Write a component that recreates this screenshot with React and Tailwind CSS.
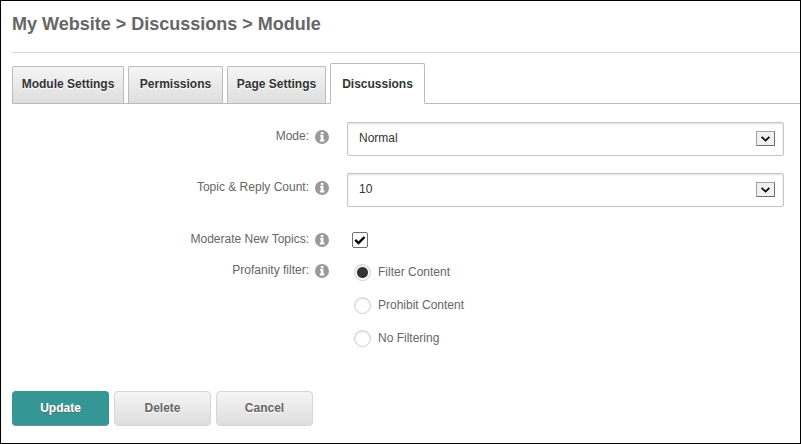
import { useState } from 'react';

function InfoIcon() {
  return (
    <svg viewBox="0 0 14 14" className="mt-0.5 h-[14px] w-[14px] shrink-0" aria-hidden="true">
      <circle cx="7" cy="7" r="7" fill="#999" />
      <path d="M5.8 2h2.6v2.2H5.8zM5 5h3.4v4.6h1V11.5H4.8V9.6h1V6.6H5z" fill="#fff" />
    </svg>
  );
}

function FieldLabel({ htmlFor, id, children }) {
  return (
    <div className="flex justify-end gap-1.5">
      {htmlFor ? <label htmlFor={htmlFor}>{children}</label> : <span id={id}>{children}</span>}
      <InfoIcon />
    </div>
  );
}

function SelectField({ id, options }) {
  return (
    <div className="relative">
      <select
        id={id}
        className="block h-[34px] w-full appearance-none rounded-xs border border-[#c6c6c6] bg-white pb-0.5 pl-[11px] text-xs text-[#333] shadow-[inset_0_1px_2px_#ddd]"
      >
        {options.map((option) => (
          <option key={option}>{option}</option>
        ))}
      </select>
      <span className="pointer-events-none absolute top-[9px] right-[9px] flex h-[15px] w-[19px] items-center justify-center border border-[#707070] border-t-[#a0a0a0] border-l-[#a0a0a0] bg-[#f0f0f0]">
        <svg viewBox="0 0 9 6" className="h-[6px] w-[9px]" aria-hidden="true">
          <path d="M0.6 0.8l3.9 3.7L8.4 0.8" fill="none" stroke="#000" strokeWidth="1.7" />
        </svg>
      </span>
    </div>
  );
}

const tabs = [
  { name: 'Module Settings', width: 'w-[112px]' },
  { name: 'Permissions', width: 'w-[95px]' },
  { name: 'Page Settings', width: 'w-[99px]' },
  { name: 'Discussions', width: 'w-[95px]' },
];

const filters = ['Filter Content', 'Prohibit Content', 'No Filtering'];

export default function App() {
  const [active, setActive] = useState('Discussions');
  const [filter, setFilter] = useState('Filter Content');

  return (
    <main className="min-h-screen border border-black bg-white pl-[11px] font-['Liberation_Sans',Arial,sans-serif] text-xs text-[#666]">
      <h1 className="border-b border-[#d9d9d9] pt-[11px] pb-4 text-lg leading-6 font-bold">
        My Website &gt; Discussions &gt; Module
      </h1>

      <div role="tablist" className="mt-2.5 flex h-[41px] items-end gap-1 border-b border-[#bbb]">
        {tabs.map((tab) => (
          <button
            key={tab.name}
            type="button"
            role="tab"
            aria-selected={active === tab.name}
            onClick={() => setActive(tab.name)}
            className={`${tab.width} rounded-t-xs border border-[#bbb] font-bold text-[#333] ${
              active === tab.name
                ? '-mb-px h-[41px] border-b-white bg-white'
                : 'h-[37px] border-b-0 bg-linear-to-b from-[#f5f5f5] to-[#dedede] pb-0.5 [text-shadow:0_1px_1px_white]'
            }`}
          >
            {tab.name}
          </button>
        ))}
      </div>

      <form className="pt-[18px] pr-4" onSubmit={(event) => event.preventDefault()}>
        <div className="grid grid-cols-[317px_1fr] gap-x-[18px]">
          <div className="pt-1.5">
            <FieldLabel htmlFor="mode">Mode:</FieldLabel>
          </div>
          <SelectField id="mode" options={['Normal', 'Moderated']} />

          <div className="mt-[17px] pt-1.5">
            <FieldLabel htmlFor="count">Topic &amp; Reply Count:</FieldLabel>
          </div>
          <div className="mt-[17px]">
            <SelectField id="count" options={['10', '20', '50']} />
          </div>

          <div className="mt-6">
            <FieldLabel htmlFor="moderate">Moderate New Topics:</FieldLabel>
          </div>
          <div className="relative mt-[25px] ml-[5px] h-4 w-4">
            <input
              id="moderate"
              type="checkbox"
              defaultChecked
              className="peer block h-4 w-4 appearance-none rounded-xs border border-[#707070] bg-white"
            />
            <svg
              viewBox="0 0 16 16"
              className="pointer-events-none absolute inset-0 hidden h-4 w-4 peer-checked:block"
              aria-hidden="true"
            >
              <path d="M3.2 7.8l3.3 3.2 6-6" fill="none" stroke="#000" strokeWidth="2.4" />
            </svg>
          </div>

          <div className="mt-[14px]">
            <FieldLabel id="filter-label">Profanity filter:</FieldLabel>
          </div>
          <div
            role="radiogroup"
            aria-labelledby="filter-label"
            className="mt-[15px] ml-[7px] flex flex-col gap-[15px]"
          >
            {filters.map((name) => (
              <label key={name} className="flex h-[18px] items-center gap-[7px]">
                <input
                  type="radio"
                  name="filter"
                  checked={filter === name}
                  onChange={() => setFilter(name)}
                  className="h-[17px] w-[17px] appearance-none rounded-full border border-[#d0d0d0] bg-white shadow-[inset_0_1px_2px_#ddd] checked:bg-[radial-gradient(circle,#333_5px,white_6px)]"
                />
                {name}
              </label>
            ))}
          </div>
        </div>

        <div className="mt-11 flex gap-[5px] font-bold">
          <button
            type="submit"
            className="h-[35px] w-[97px] rounded-sm border border-[#359795] border-b-[#6f9290] bg-[#359795] pb-0.5 text-white [text-shadow:0_1px_1px_#666]"
          >
            Update
          </button>
          {['Delete', 'Cancel'].map((name) => (
            <button
              key={name}
              type="button"
              className="h-[35px] w-[97px] rounded-sm border border-[#d6d6d6] bg-linear-to-b from-[#f5f5f5] to-[#dedede] pb-0.5 [text-shadow:0_1px_1px_white]"
            >
              {name}
            </button>
          ))}
        </div>
      </form>
    </main>
  );
}
